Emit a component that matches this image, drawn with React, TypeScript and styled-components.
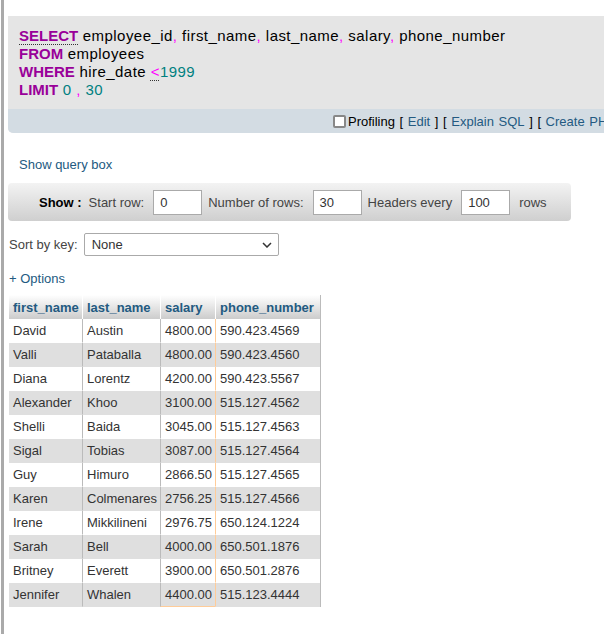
import styled, { createGlobalStyle } from 'styled-components';

const GlobalStyle = createGlobalStyle`
  html, body {
    margin: 0;
    padding: 0;
    background: #fff;
  }
  body {
    font-family: "Liberation Sans", Arial, sans-serif;
    font-size: 13px;
    color: #444;
  }
`;

const Page = styled.div`
  box-sizing: border-box;
  min-height: 634px;
  margin-left: 1px;
  border-left: 3px solid #aaa;
  padding: 16px 0 0 4px;
  overflow: hidden;
`;

const SqlBox = styled.div`
  width: 900px;
  background: #e5e5e5;
  border-bottom-left-radius: 5px;
  overflow: hidden;
`;

const SqlCode = styled.div`
  padding: 11px 11px 10px;
  font-size: 15px;
  line-height: 18px;
  color: #000;
  letter-spacing: 0.45px;
`;

const dotted = `
  text-decoration-line: underline;
  text-decoration-style: dotted;
  text-decoration-color: #333;
  text-decoration-thickness: 1px;
  text-underline-offset: 3px;
`;

const Keyword = styled.span<{ $dotted?: boolean }>`
  color: #990099;
  font-weight: bold;
  letter-spacing: 0;
  ${(p) => p.$dotted && dotted}
`;

const Punct = styled.span<{ $dotted?: boolean }>`
  color: #ff00ff;
  ${(p) => p.$dotted && dotted}
`;

const Num = styled.span`
  color: #008080;
`;

const OptionsBar = styled.div`
  display: flex;
  align-items: center;
  height: 24px;
  padding-left: 325px;
  background: #d3dce3;
  color: #000;
  white-space: pre;
  word-spacing: 1px;
`;

const Check = styled.span`
  display: inline-block;
  box-sizing: border-box;
  width: 13px;
  height: 13px;
  margin-right: 2px;
  border: 2px solid #888;
  border-radius: 2px;
  background: #fff;
`;

const Link = styled.a`
  color: #235a81;
  text-decoration: none;
  cursor: pointer;
`;

const QueryLink = styled.div`
  margin: 24px 0 0 11px;
  line-height: 16px;
  color: #235a81;
`;

const ShowBar = styled.div`
  box-sizing: border-box;
  display: flex;
  align-items: center;
  width: 563px;
  height: 38px;
  margin-top: 10px;
  padding-left: 31px;
  border-radius: 4px;
  background: linear-gradient(#f3f3f3, #cfcfcf);
  white-space: nowrap;
`;

const ShowLabel = styled.b`
  color: #000;
  margin-right: 7px;
`;

const Label = styled.span<{ $gap?: number }>`
  margin-right: 9px;
  margin-left: ${(p) => p.$gap ?? 0}px;
`;

const NumInput = styled.div`
  box-sizing: border-box;
  width: 49px;
  height: 25px;
  margin-right: 6px;
  padding-left: 6px;
  line-height: 23px;
  border: 1px solid #aaa;
  background: #fff;
  color: #333;
`;

const SortRow = styled.div`
  display: flex;
  align-items: center;
  margin-top: 12px;
  padding-left: 1px;
`;

const SelectBox = styled.div`
  box-sizing: border-box;
  display: flex;
  align-items: center;
  justify-content: space-between;
  width: 195px;
  height: 23px;
  margin-left: 6px;
  padding: 0 6px 0 7px;
  border: 1px solid #aaa;
  border-radius: 2px;
  background: #fff;
  color: #333;
`;

const OptionsLink = styled.div`
  margin: 15px 0 0 1px;
  line-height: 16px;
  color: #235a81;
`;

const Table = styled.table`
  width: 311px;
  margin: 8px 0 0 1px;
  table-layout: fixed;
  border-collapse: separate;
  border-spacing: 0;
  border-right: 1px solid #bbb;
`;

const Th = styled.th<{ $w: number }>`
  box-sizing: border-box;
  width: ${(p) => p.$w}px;
  height: 24px;
  padding: 0 4px;
  text-align: left;
  font-weight: bold;
  color: #235a81;
  background: linear-gradient(#fff, #ccc);
  border-left: 1px solid #fff;
  white-space: nowrap;
  &:first-child {
    border-left: none;
  }
`;

const Tr = styled.tr<{ $even: boolean }>`
  background: ${(p) => (p.$even ? '#dfdfdf' : '#fff')};
`;

const Td = styled.td<{ $num?: boolean; $edge?: string; $base?: boolean }>`
  box-sizing: border-box;
  height: 24px;
  padding: 0 4px;
  color: #333;
  white-space: nowrap;
  overflow: hidden;
  text-align: ${(p) => (p.$num ? 'right' : 'left')};
  border-left: 1px solid ${(p) => p.$edge ?? '#bbb'};
  border-bottom: 1px solid ${(p) => (p.$base ? '#ffcc99' : 'transparent')};
  &:first-child {
    border-left: none;
  }
`;

const rows = [
  ['David', 'Austin', '4800.00', '590.423.4569'],
  ['Valli', 'Pataballa', '4800.00', '590.423.4560'],
  ['Diana', 'Lorentz', '4200.00', '590.423.5567'],
  ['Alexander', 'Khoo', '3100.00', '515.127.4562'],
  ['Shelli', 'Baida', '3045.00', '515.127.4563'],
  ['Sigal', 'Tobias', '3087.00', '515.127.4564'],
  ['Guy', 'Himuro', '2866.50', '515.127.4565'],
  ['Karen', 'Colmenares', '2756.25', '515.127.4566'],
  ['Irene', 'Mikkilineni', '2976.75', '650.124.1224'],
  ['Sarah', 'Bell', '4000.00', '650.501.1876'],
  ['Britney', 'Everett', '3900.00', '650.501.2876'],
  ['Jennifer', 'Whalen', '4400.00', '515.123.4444'],
];

const App = () => {
  return (
    <>
      <GlobalStyle />
      <Page>
        <SqlBox>
          <SqlCode>
            <div>
              <Keyword $dotted>SELECT</Keyword> employee_id<Punct>,</Punct> first_name<Punct>,</Punct>{' '}
              last_name<Punct>,</Punct> salary<Punct>,</Punct> phone_number
            </div>
            <div>
              <Keyword>FROM</Keyword> employees
            </div>
            <div>
              <Keyword>WHERE</Keyword> hire_date <Punct $dotted>&lt;</Punct>
              <Num>1999</Num>
            </div>
            <div>
              <Keyword>LIMIT</Keyword> <Num>0</Num> <Punct>,</Punct> <Num>30</Num>
            </div>
          </SqlCode>
          <OptionsBar>
            <Check />
            {'Profiling [ '}
            <Link>Edit</Link>
            {' ] [ '}
            <Link>Explain SQL</Link>
            {' ] [ '}
            <Link>Create PHP code</Link>
            {' ]'}
          </OptionsBar>
        </SqlBox>

        <QueryLink>Show query box</QueryLink>

        <ShowBar>
          <ShowLabel>Show :</ShowLabel>
          <Label>Start row:</Label>
          <NumInput>0</NumInput>
          <Label>Number of rows:</Label>
          <NumInput>30</NumInput>
          <Label>Headers every</Label>
          <NumInput>100</NumInput>
          <Label $gap={3}>rows</Label>
        </ShowBar>

        <SortRow>
          Sort by key:
          <SelectBox>
            None
            <svg width="10" height="6" viewBox="0 0 10 6">
              <path d="M1 1l4 4 4-4" fill="none" stroke="#333" strokeWidth="1.5" />
            </svg>
          </SelectBox>
        </SortRow>

        <OptionsLink>+ Options</OptionsLink>

        <Table>
          <thead>
            <tr>
              <Th $w={73}>first_name</Th>
              <Th $w={78}>last_name</Th>
              <Th $w={55}>salary</Th>
              <Th $w={105}>phone_number</Th>
            </tr>
          </thead>
          <tbody>
            {rows.map((r, i) => {
              const last = i === rows.length - 1;
              return (
                <Tr key={r[0]} $even={i % 2 === 1}>
                  <Td>{r[0]}</Td>
                  <Td>{r[1]}</Td>
                  <Td $num $base={last}>
                    {r[2]}
                  </Td>
                  <Td $edge="#ffcc99">{r[3]}</Td>
                </Tr>
              );
            })}
          </tbody>
        </Table>
      </Page>
    </>
  );
};

export default App;
